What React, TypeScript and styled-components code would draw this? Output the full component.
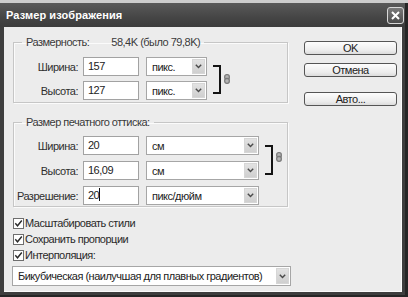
import React from 'react';
import styled, { createGlobalStyle } from 'styled-components';

const GlobalStyle = createGlobalStyle`
    html, body {
        margin: 0;
        padding: 0;
        background: #262626;
    }
    body {
        font-family: "Liberation Sans", Arial, sans-serif;
        font-size: 11px;
        letter-spacing: -0.5px;
        color: #2e2e2e;
    }
`;

const Screen = styled.div`
    width: 408px;
    height: 297px;
    overflow: hidden;
    background: #262626;
    border-top: 3px solid #cdcdcd;
    box-sizing: border-box;
`;

const Window = styled.div`
    width: 405px;
    height: 292px;
    display: flex;
    flex-direction: column;
    background: #3e3e3e;
`;

const TitleBar = styled.div`
    height: 24px;
    display: flex;
    align-items: center;
    justify-content: space-between;
    padding: 0 1px 0 6px;
    background: linear-gradient(#5a5a5a, #454545 60%, #3c3c3c);
`;

const Title = styled.div`
    color: #fff;
    font-weight: bold;
    font-size: 11px;
    letter-spacing: 0.1px;
`;

const CloseButton = styled.div`
    width: 15px;
    height: 15px;
    border: 1px solid #d8d8d8;
    border-radius: 3px;
    background: linear-gradient(#7a7a7a, #4c4c4c);
    display: flex;
    align-items: center;
    justify-content: center;
`;

const Body = styled.div`
    flex: 1;
    margin: 0 3px 3px 4px;
    background: #ececec;
    border-right: 1px solid #fafafa;
    border-bottom: 1px solid #fafafa;
    display: flex;
    padding: 8px 0 0 8px;
`;

const LeftColumn = styled.div`
    width: 280px;
    display: flex;
    flex-direction: column;
`;

const RightColumn = styled.div`
    margin-left: 12px;
    padding-top: 6px;
    display: flex;
    flex-direction: column;
    width: 93px;
`;

const Group = styled.fieldset<{ $top?: number }>`
    margin: ${(p) => p.$top ?? 0}px 0 0 1px;
    width: 275px;
    box-sizing: border-box;
    padding: 0 0 ${(p) => (p.$top ? 1 : 2)}px 0;
    border: 1px solid #c6c6c6;
    box-shadow: inset 1px 1px 0 #fbfbfb, 1px 1px 0 #fbfbfb;
`;

const Legend = styled.legend`
    margin-left: 8px;
    padding: 0 4px;
    line-height: 14px;
    color: #3a3a3a;
`;

const LegendValue = styled.span`
    margin-left: 22px;
`;

const GroupInner = styled.div<{ $pad: number }>`
    display: flex;
    padding-top: ${(p) => p.$pad}px;
`;

const Rows = styled.div<{ $gap: number }>`
    display: flex;
    flex-direction: column;
    gap: ${(p) => p.$gap}px;
`;

const Row = styled.div`
    display: flex;
    align-items: center;
    height: 19px;
`;

const Label = styled.div`
    width: 64px;
    margin-right: 5px;
    text-align: right;
    white-space: nowrap;
`;

const Input = styled.div`
    width: 56px;
    height: 19px;
    box-sizing: border-box;
    border: 1px solid #a2a2a2;
    background: #fff;
    padding: 0 4px;
    line-height: 17px;
    color: #222;
    margin-right: 7px;
`;

const Caret = styled.span`
    display: inline-block;
    width: 1px;
    height: 13px;
    background: #111;
    vertical-align: -2px;
`;

const Select = styled.div<{ $w: number; $h?: number }>`
    width: ${(p) => p.$w}px;
    height: ${(p) => p.$h ?? 19}px;
    box-sizing: border-box;
    border: 1px solid #a6a6a6;
    background: #fff;
    display: flex;
    align-items: stretch;
    padding: 1px;
`;

const SelectText = styled.div`
    flex: 1;
    padding-left: 4px;
    display: flex;
    align-items: center;
    color: #222;
    white-space: nowrap;
    overflow: hidden;
`;

const ArrowBox = styled.div`
    width: 13px;
    background: linear-gradient(#e2e2e2, #cfcfcf);
    border: 1px solid #d6d6d6;
    box-sizing: border-box;
    display: flex;
    align-items: center;
    justify-content: center;
`;

const Bracket = styled.div<{ $top: number; $h: number }>`
    margin: ${(p) => p.$top}px 0 0 6px;
    width: 6px;
    height: ${(p) => p.$h}px;
    border: 2px solid #141414;
    border-left: none;
`;

const ChainWrap = styled.div<{ $top: number }>`
    margin: ${(p) => p.$top}px 0 0 3px;
    width: 6px;
    height: 10px;
`;

const Checks = styled.div`
    margin-top: 8px;
    display: flex;
    flex-direction: column;
`;

const CheckRow = styled.div`
    height: 16px;
    display: flex;
    align-items: center;
    padding-left: 1px;
    color: #2a2a2a;
`;

const Box = styled.div`
    width: 11px;
    height: 11px;
    box-sizing: border-box;
    border: 1px solid #6e6e6e;
    background: #fff;
    margin-right: 1px;
    display: flex;
    align-items: center;
    justify-content: center;
`;

const InterpSelect = styled(Select)`
    margin-top: 3px;
`;

const Button = styled.div<{ $top: number }>`
    margin-top: ${(p) => p.$top}px;
    height: 14px;
    box-sizing: border-box;
    border: 1px solid #555;
    border-radius: 3px;
    background: linear-gradient(#fdfdfd, #ececec 70%, #dcdcdc);
    display: flex;
    align-items: center;
    justify-content: center;
    color: #222;
`;

const Chevron = () => (
    <svg width="7" height="5" viewBox="0 0 7 5">
        <path d="M0.8 0.8 L3.5 3.6 L6.2 0.8" fill="none" stroke="#4a4a4a" strokeWidth="1.4" />
    </svg>
);

const Chain = () => (
    <svg width="6" height="10" viewBox="0 0 6 10">
        <rect x="0.7" y="0.7" width="4.6" height="4.8" rx="2" fill="#b4b4b4" stroke="#7a7a7a" strokeWidth="1.3" />
        <rect x="0.7" y="4.5" width="4.6" height="4.8" rx="2" fill="#b4b4b4" stroke="#7a7a7a" strokeWidth="1.3" />
    </svg>
);

const Tick = () => (
    <svg width="9" height="9" viewBox="0 0 9 9">
        <path d="M1.3 4.3 L3.5 6.8 L7.8 1.5" fill="none" stroke="#2a2a2a" strokeWidth="1.4" />
    </svg>
);

const CloseIcon = () => (
    <svg width="9" height="9" viewBox="0 0 9 9">
        <path d="M1 1 L8 8 M8 1 L1 8" stroke="#fff" strokeWidth="2" />
    </svg>
);

type DropProps = { w: number; h?: number; children: React.ReactNode };

function Drop({ w, h, children }: DropProps) {
    return (
        <Select $w={w} $h={h}>
            <SelectText>{children}</SelectText>
            <ArrowBox>
                <Chevron />
            </ArrowBox>
        </Select>
    );
}

export default function App(): JSX.Element {
    return (
        <>
            <GlobalStyle />
            <Screen>
                <Window>
                    <TitleBar>
                        <Title>Размер изображения</Title>
                        <CloseButton>
                            <CloseIcon />
                        </CloseButton>
                    </TitleBar>
                    <Body>
                        <LeftColumn>
                            <Group>
                                <Legend>
                                    Размерность:<LegendValue>58,4K (было 79,8K)</LegendValue>
                                </Legend>
                                <GroupInner $pad={8}>
                                    <Rows $gap={5}>
                                        <Row>
                                            <Label>Ширина:</Label>
                                            <Input>157</Input>
                                            <Drop w={61}>пикс.</Drop>
                                        </Row>
                                        <Row>
                                            <Label>Высота:</Label>
                                            <Input>127</Input>
                                            <Drop w={61}>пикс.</Drop>
                                        </Row>
                                    </Rows>
                                    <Bracket $top={8} $h={25} />
                                    <ChainWrap $top={17}>
                                        <Chain />
                                    </ChainWrap>
                                </GroupInner>
                            </Group>
                            <Group $top={12}>
                                <Legend>Размер печатного оттиска:</Legend>
                                <GroupInner $pad={7}>
                                    <Rows $gap={6}>
                                        <Row>
                                            <Label>Ширина:</Label>
                                            <Input>20</Input>
                                            <Drop w={113}>см</Drop>
                                        </Row>
                                        <Row>
                                            <Label>Высота:</Label>
                                            <Input>16,09</Input>
                                            <Drop w={113}>см</Drop>
                                        </Row>
                                        <Row>
                                            <Label>Разрешение:</Label>
                                            <Input>
                                                20<Caret />
                                            </Input>
                                            <Drop w={113}>пикс/дюйм</Drop>
                                        </Row>
                                    </Rows>
                                    <Bracket $top={9} $h={26} />
                                    <ChainWrap $top={16}>
                                        <Chain />
                                    </ChainWrap>
                                </GroupInner>
                            </Group>
                            <Checks>
                                <CheckRow>
                                    <Box>
                                        <Tick />
                                    </Box>
                                    Масштабировать стили
                                </CheckRow>
                                <CheckRow>
                                    <Box>
                                        <Tick />
                                    </Box>
                                    Сохранить пропорции
                                </CheckRow>
                                <CheckRow>
                                    <Box>
                                        <Tick />
                                    </Box>
                                    Интерполяция:
                                </CheckRow>
                            </Checks>
                            <InterpSelect as="div" $w={279} $h={20}>
                                <SelectText>Бикубическая (наилучшая для плавных градиентов)</SelectText>
                                <ArrowBox>
                                    <Chevron />
                                </ArrowBox>
                            </InterpSelect>
                        </LeftColumn>
                        <RightColumn>
                            <Button $top={0}>OK</Button>
                            <Button $top={8}>Отмена</Button>
                            <Button $top={15}>Авто...</Button>
                        </RightColumn>
                    </Body>
                </Window>
            </Screen>
        </>
    );
}
